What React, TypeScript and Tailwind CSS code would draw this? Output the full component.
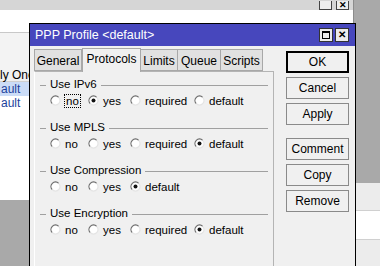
import React from "react";

const font = { fontFamily: '"Liberation Sans", Arial, sans-serif' };

// classic windows radio: dark arc top-left, light arc bottom-right
function Radio({ checked }: { checked?: boolean }) {
  return (
    <svg width="11" height="11" viewBox="0 0 11 11" className="shrink-0">
      <circle cx="5.5" cy="5.5" r="4.5" fill="#ffffff" />
      <path d="M8.7 2.3A4.5 4.5 0 1 0 2.3 8.7" fill="none" stroke="#6b6b6b" strokeWidth="1.2" />
      <path d="M2.3 8.7A4.5 4.5 0 0 0 8.7 2.3" fill="none" stroke="#e4e4e4" strokeWidth="1.2" />
      {checked && <circle cx="5.5" cy="5.5" r="2" fill="#111111" />}
    </svg>
  );
}

function Option({ label, checked, focus }: { label: string; checked?: boolean; focus?: boolean }) {
  return (
    <div className="flex items-center gap-[4px]">
      <Radio checked={checked} />
      <span className={focus ? "px-[1px] outline outline-1 outline-dotted outline-black leading-[12px]" : "leading-[12px]"}>
        {label}
      </span>
    </div>
  );
}

function Section({ title, options, selected, focus }: { title: string; options: string[]; selected: string; focus?: string }) {
  const widths: Record<string, string> = {
    no: "w-[38px]",
    yes: "w-[42px]",
    required: "w-[64px]",
    default: "w-[60px]",
  };
  return (
    <div className="h-[43px]">
      <div className="flex items-center h-[14px]">
        <div className="w-[6px] h-px bg-[#a0a0a0] ml-[5px]" />
        <span className="px-[4px]">{title}</span>
        <div className="flex-1 h-px bg-[#a0a0a0] mr-[5px]" />
      </div>
      <div className="flex items-center h-[13px] mt-[2px] pl-[15px]">
        {options.map((o) => (
          <div key={o} className={widths[o]}>
            <Option label={o} checked={o === selected} focus={o === focus} />
          </div>
        ))}
      </div>
    </div>
  );
}

function Tab({ label, active, w }: { label: string; active?: boolean; w: string }) {
  return active ? (
    <div className={`${w} h-[24px] -mb-px z-10 bg-[#f0f0f0] border border-b-0 border-[#a8a8a8] flex items-center justify-center pb-[3px]`}>
      {label}
    </div>
  ) : (
    <div className={`${w} h-[22px] bg-[#e1e1e1] border border-[#a8a8a8] -ml-px flex items-center justify-center pt-[1px]`}>
      {label}
    </div>
  );
}

function Btn({ label, primary }: { label: string; primary?: boolean }) {
  return (
    <div
      className={`h-[22px] flex items-center justify-center bg-[#f0f0f0] ${
        primary ? "border-2 border-black" : "border border-[#8a8a8a]"
      }`}
    >
      {label}
    </div>
  );
}

export default function App() {
  return (
    <div className="relative w-[380px] h-[266px] overflow-hidden bg-[#a9a9a9] text-[12px] text-black" style={font}>
      {/* window behind */}
      <div className="absolute left-0 top-0 w-[354px] h-[200px] bg-[#f6f6f6] border-r border-[#8c8c8c] flex flex-col">
        <div className="h-[10px] bg-[#d6d6d6] flex justify-end items-end gap-[4px] pr-[4px]">
          <div className="w-[13px] h-[9px] border border-[#444] border-t-0 bg-[#eeeeee]" />
          <div className="w-[13px] h-[9px] border border-[#444] border-t-0 bg-[#eeeeee] text-[9px] leading-[8px] text-center font-bold">✕</div>
        </div>
        <div className="h-[23px] bg-white border-b border-[#c8c8c8]" />
        <div className="h-[37px] bg-[#f3f3f3]" />
        <div className="h-[12px] bg-[#f0f0f0] border-b border-[#cfcfcf] flex items-center text-[12px] leading-[11px]">
          <span>ly One</span>
        </div>
        <div className="h-[14px] bg-[#cbdcf7] text-[#1c3f9c] leading-[14px] pl-[1px]">ault</div>
        <div className="h-[14px] bg-white text-[#1c3f9c] leading-[14px] pl-[1px]">ault</div>
        <div className="flex-1 bg-white" />
      </div>
      {/* window below right */}
      <div className="absolute left-[300px] top-[183px] w-[90px] h-[100px] bg-[#ececec] flex flex-col">
        <div className="h-[27px]" />
        <div className="h-[30px] bg-white border-y border-[#d0d0d0]" />
      </div>

      {/* PPP profile dialog */}
      <div className="absolute left-[29px] top-[23px] w-[327px] h-[262px] border border-black bg-[#f0f0f0] flex flex-col">
        <div className="h-[22px] bg-[#4747bd] flex items-center pl-[5px] pr-[6px] text-white">
          <span className="flex-1 text-[12.5px]">PPP Profile &lt;default&gt;</span>
          <div className="flex gap-[2px]">
            <div className="w-[14px] h-[14px] bg-[#ececec] border border-[#333] flex items-center justify-center">
              <div className="w-[8px] h-[8px] border border-black border-t-2" />
            </div>
            <div className="w-[14px] h-[14px] bg-[#ececec] border border-[#333] flex items-center justify-center text-black text-[10px] font-bold leading-none">
              ✕
            </div>
          </div>
        </div>

        <div className="flex flex-1 pt-[1px]">
          {/* tabs and panel */}
          <div className="ml-[4px] w-[240px] flex flex-col">
            <div className="flex items-end h-[24px] pl-[1px]">
              <Tab label="General" w="w-[48px]" />
              <Tab label="Protocols" w="w-[59px]" active />
              <Tab label="Limits" w="w-[38px]" />
              <Tab label="Queue" w="w-[44px]" />
              <Tab label="Scripts" w="w-[43px]" />
            </div>
            <div className="flex-1 border border-[#b4b4b4] border-l-white bg-[#f0f0f0] pt-[6px] text-[11.5px]">
              <Section title="Use IPv6" options={["no", "yes", "required", "default"]} selected="yes" focus="no" />
              <Section title="Use MPLS" options={["no", "yes", "required", "default"]} selected="default" />
              <Section title="Use Compression" options={["no", "yes", "default"]} selected="default" />
              <Section title="Use Encryption" options={["no", "yes", "required", "default"]} selected="default" />
            </div>
          </div>

          {/* buttons */}
          <div className="ml-[12px] w-[63px] flex flex-col gap-[4px] pt-[4px]">
            <Btn label="OK" primary />
            <Btn label="Cancel" />
            <Btn label="Apply" />
            <div className="h-[5px]" />
            <Btn label="Comment" />
            <Btn label="Copy" />
            <Btn label="Remove" />
          </div>
        </div>
      </div>
    </div>
  );
}
